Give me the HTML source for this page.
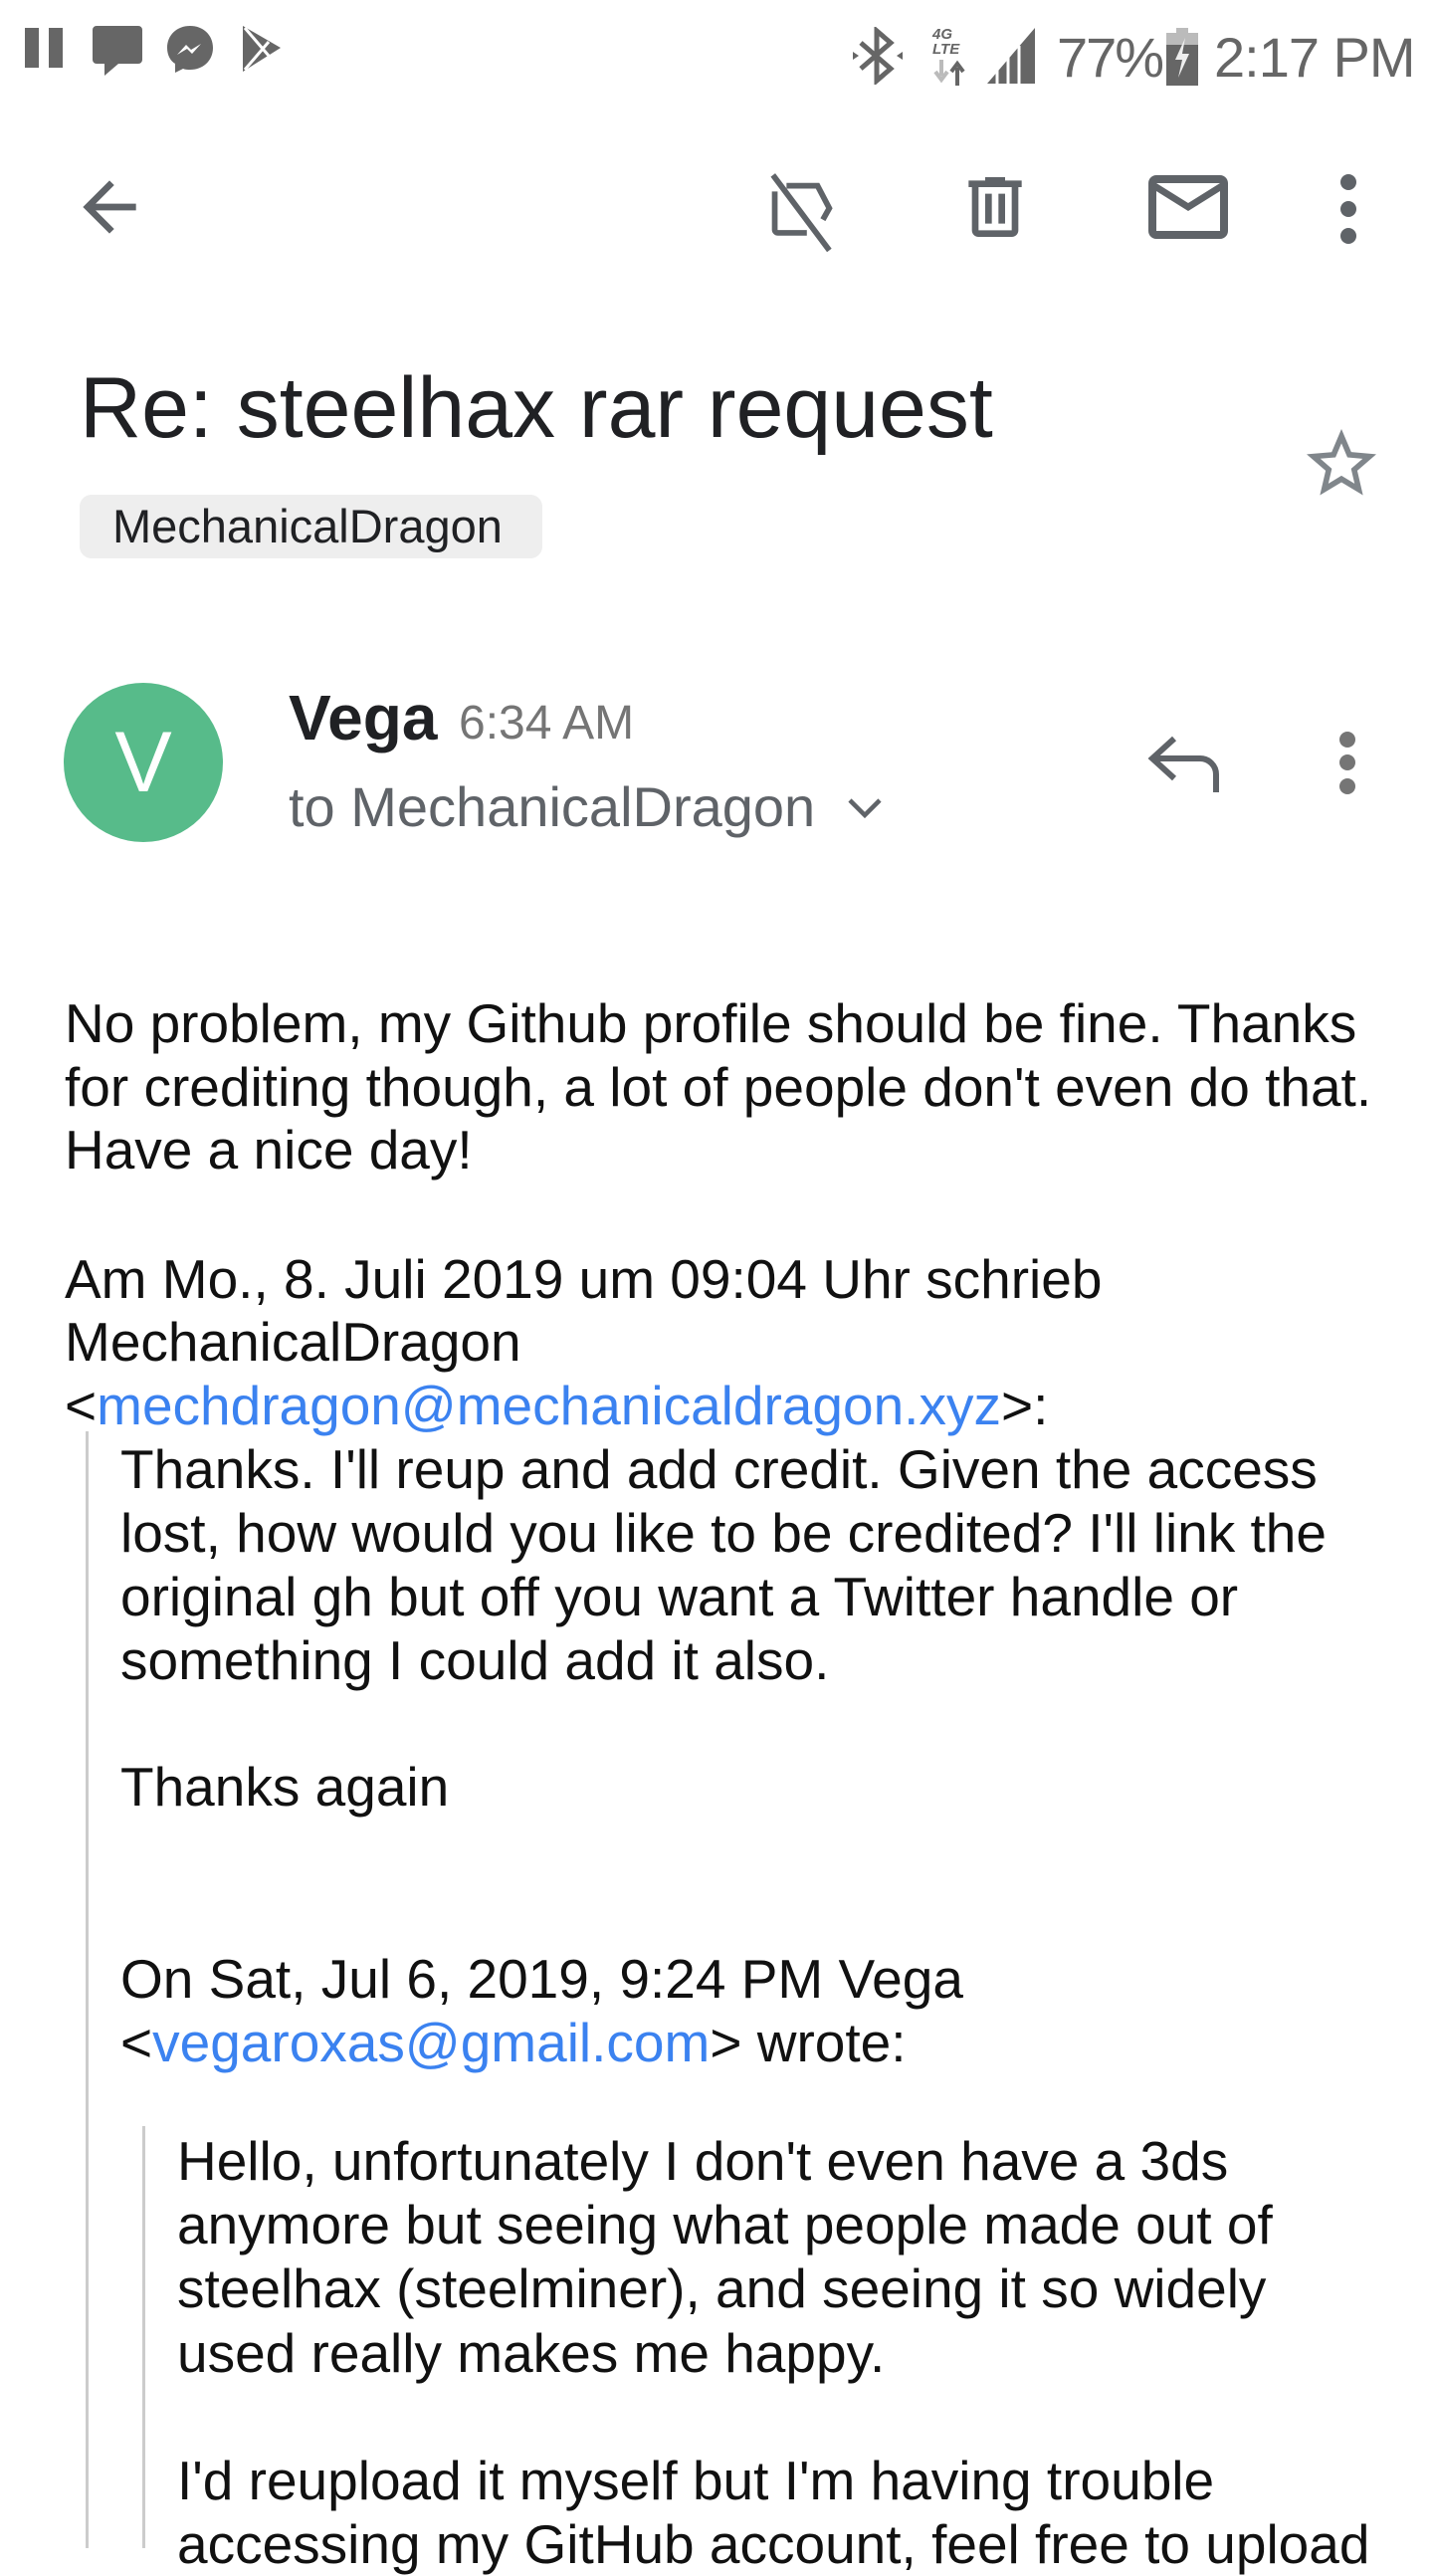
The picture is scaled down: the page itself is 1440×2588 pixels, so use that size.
<!DOCTYPE html>
<html><head><meta charset="utf-8">
<style>
html,body{margin:0;padding:0;background:#fff;}
body{width:1440px;height:2560px;position:relative;overflow:hidden;font-family:"Liberation Sans",Arial,sans-serif;color:#202124;}
.a{position:absolute;white-space:nowrap;}
.ln{position:absolute;white-space:nowrap;font-size:55px;line-height:64px;height:64px;color:#111;margin-top:6px;}
.lk{color:#3b82f0;}
svg{position:absolute;}
</style></head><body>

<!-- status bar -->
<svg style="left:25px;top:28px" width="40" height="40"><rect x="0" y="0" width="14" height="40" fill="#666"/><rect x="24" y="0" width="14" height="40" fill="#666"/></svg>
<svg style="left:93px;top:26px" width="52" height="52"><path d="M4 0h42a4 4 0 0 1 4 4v30a4 4 0 0 1-4 4H26L12 50V38H4a4 4 0 0 1-4-4V4a4 4 0 0 1 4-4z" fill="#666"/></svg>
<svg style="left:166px;top:25px" width="50" height="50"><path d="M25 1C12 1 2 10 2 23c0 7 3 13 8 16v9l8-4c2 1 5 1 7 1 13 0 23-9 23-22S38 1 25 1z" fill="#666"/><path d="M12 30l9-10 5 5 10-6-9 10-5-5z" fill="#fff"/></svg>
<svg style="left:242px;top:26px" width="46" height="48"><path d="M2 0L40 22 2 46z" fill="#666"/><path d="M4 2L28 30M4 44L28 16" stroke="#fff" stroke-width="3"/></svg>

<svg style="left:857px;top:27px" width="50" height="58" viewBox="0 0 50 58"><path d="M8 16l30 26-14 12V4l14 12L8 42" fill="none" stroke="#666" stroke-width="5"/><path d="M0 25l6 4-6 4zM50 25l-6 4 6 4z" fill="#666"/></svg>
<div class="a" style="left:937px;top:27px;font-size:15px;font-weight:bold;color:#666;line-height:15px;font-style:italic">4G<br>LTE</div>
<svg style="left:938px;top:60px" width="34" height="26"><path d="M8 0v16M2 12l6 8 6-8" stroke="#bbb" stroke-width="4" fill="none"/><path d="M24 26V8M18 12l6-8 6 8" stroke="#666" stroke-width="4" fill="none"/></svg>
<svg style="left:992px;top:28px" width="50" height="56"><path d="M0 56L48 0v56z" fill="#666"/><path d="M10 56V40M21 56V30M32 56V18" stroke="#fff" stroke-width="3"/></svg>
<div class="a" style="left:1062px;top:26px;font-size:56px;line-height:64px;color:#666;letter-spacing:-2px">77%</div>
<svg style="left:1172px;top:28px" width="32" height="58"><rect x="10" y="0" width="12" height="5" fill="#bbb"/><rect x="0" y="5" width="32" height="12" fill="#bbb"/><rect x="0" y="17" width="32" height="41" fill="#666"/><path d="M19 10l-10 22h7l-4 18 11-24h-7z" fill="#eee"/></svg>
<div class="a" style="left:1220px;top:26px;font-size:56px;line-height:64px;color:#666;letter-spacing:-1px">2:17 PM</div>

<!-- toolbar -->
<svg style="left:70px;top:168px" width="80" height="80" viewBox="0 0 24 24"><path d="M20 11H7.83l5.59-5.59L12 4l-8 8 8 8 1.41-1.41L7.83 13H20v-2z" fill="#5f6368"/></svg>
<svg style="left:766px;top:168px" width="86" height="86" viewBox="0 0 24 24"><path d="M3 2.2L18.8 23.3" stroke="#5f6368" stroke-width="1.6"/><path d="M3.5 6.8V17.5c0 .5.4.9.9.9H12.5M6.8 5.2H15.5l3.3 6.3-1.8 3.2" fill="none" stroke="#5f6368" stroke-width="1.6"/></svg>
<svg style="left:960px;top:168px" width="80" height="80" viewBox="0 0 24 24"><path d="M15 4V3H9v1H4v2h1v13c0 1.1.9 2 2 2h10c1.1 0 2-.9 2-2V6h1V4h-5zm2 15H7V6h10v13zM9 8h2v9H9zm4 0h2v9h-2z" fill="#5f6368"/></svg>
<svg style="left:1146px;top:160px" width="96" height="96" viewBox="0 0 24 24"><path d="M20 4H4c-1.1 0-1.99.9-1.99 2L2 18c0 1.1.9 2 2 2h16c1.1 0 2-.9 2-2V6c0-1.1-.9-2-2-2zm0 14H4V8l8 5 8-5v10zm-8-7L4 6h16l-8 5z" fill="#5f6368"/></svg>
<svg style="left:1340px;top:172px" width="30" height="76"><circle cx="15" cy="11" r="8" fill="#5f6368"/><circle cx="15" cy="38" r="8" fill="#5f6368"/><circle cx="15" cy="65" r="8" fill="#5f6368"/></svg>

<!-- subject -->
<div class="a" style="left:80px;top:360px;font-size:86px;line-height:100px;color:#202124">Re: steelhax rar request</div>
<svg style="left:1306px;top:424px" width="84" height="84" viewBox="0 0 24 24"><path d="M22 9.24l-7.19-.62L12 2 9.19 8.63 2 9.24l5.46 4.73L5.82 21 12 17.27 18.18 21l-1.63-7.03L22 9.24zM12 15.4l-3.76 2.27 1-4.28-3.32-2.88 4.38-.38L12 6.1l1.71 4.04 4.38.38-3.32 2.88 1 4.28L12 15.4z" fill="#80868b"/></svg>
<div class="a" style="left:80px;top:497px;width:465px;height:64px;background:#eeeeee;border-radius:12px"></div>
<div class="a" style="left:113px;top:497px;font-size:47px;line-height:64px;color:#202124">MechanicalDragon</div>

<!-- sender -->
<div class="a" style="left:64px;top:686px;width:160px;height:160px;border-radius:50%;background:#57bb8a;color:#fff;font-size:86px;line-height:160px;text-align:center">V</div>
<div class="a" style="left:290px;top:683px;font-size:64px;line-height:76px;font-weight:bold;color:#202124">Vega</div>
<div class="a" style="left:461px;top:699px;font-size:48px;line-height:56px;color:#757575">6:34 AM</div>
<div class="a" style="left:290px;top:776px;font-size:56px;line-height:70px;color:#5f6368">to MechanicalDragon</div>
<svg style="left:850px;top:798px" width="38" height="28"><path d="M4 6l15 15 15-15" fill="none" stroke="#5f6368" stroke-width="4.5"/></svg>
<svg style="left:1152px;top:738px" width="78" height="60"><path d="M28 4L6 24l22 20" fill="none" stroke="#5f6368" stroke-width="6"/><path d="M6 24h48a16 16 0 0 1 16 16v18" fill="none" stroke="#5f6368" stroke-width="6"/></svg>
<svg style="left:1342px;top:731px" width="30" height="70"><circle cx="12" cy="12" r="8" fill="#757575"/><circle cx="12" cy="35" r="8" fill="#757575"/><circle cx="12" cy="59" r="8" fill="#757575"/></svg>

<!-- body -->
<div class="ln" style="left:65px;top:990px">No problem, my Github profile should be fine. Thanks</div>
<div class="ln" style="left:65px;top:1054px">for crediting though, a lot of people don't even do that.</div>
<div class="ln" style="left:65px;top:1117px">Have a nice day!</div>
<div class="ln" style="left:65px;top:1247px">Am Mo., 8. Juli 2019 um 09:04 Uhr schrieb</div>
<div class="ln" style="left:65px;top:1310px">MechanicalDragon</div>
<div class="ln" style="left:65px;top:1374px">&lt;<span class="lk">mechdragon@mechanicaldragon.xyz</span>&gt;:</div>

<div class="a" style="left:86px;top:1438px;width:3px;height:1122px;background:#cccccc"></div>
<div class="ln" style="left:121px;top:1438px">Thanks. I'll reup and add credit. Given the access</div>
<div class="ln" style="left:121px;top:1502px">lost, how would you like to be credited? I'll link the</div>
<div class="ln" style="left:121px;top:1566px">original gh but off you want a Twitter handle or</div>
<div class="ln" style="left:121px;top:1630px">something I could add it also.</div>
<div class="ln" style="left:121px;top:1757px">Thanks again</div>
<div class="ln" style="left:121px;top:1950px">On Sat, Jul 6, 2019, 9:24 PM Vega</div>
<div class="ln" style="left:121px;top:2014px">&lt;<span class="lk">vegaroxas@gmail.com</span>&gt; wrote:</div>

<div class="a" style="left:143px;top:2136px;width:3px;height:424px;background:#cccccc"></div>
<div class="ln" style="left:178px;top:2133px">Hello, unfortunately I don't even have a 3ds</div>
<div class="ln" style="left:178px;top:2197px">anymore but seeing what people made out of</div>
<div class="ln" style="left:178px;top:2261px">steelhax (steelminer), and seeing it so widely</div>
<div class="ln" style="left:178px;top:2326px">used really makes me happy.</div>
<div class="ln" style="left:178px;top:2454px">I'd reupload it myself but I'm having trouble</div>
<div class="ln" style="left:178px;top:2518px">accessing my GitHub account, feel free to upload</div>

</body></html>
